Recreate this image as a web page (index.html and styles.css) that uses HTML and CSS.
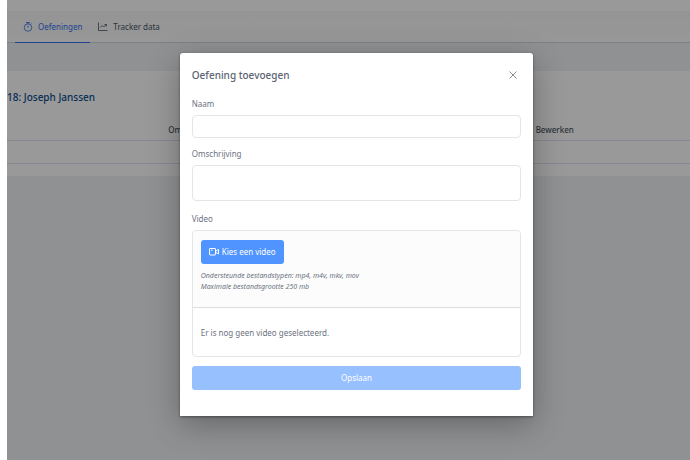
FILE: index.html
```html
<!DOCTYPE html>
<html lang="nl">

<head>
    <meta charset="UTF-8">
    <meta name="viewport" content="width=device-width, initial-scale=1.0">
    <title>Oefeningen</title>
    <link rel="stylesheet" href="styles.css">
</head>

<body>
    <div class="app">
        <div class="topbar"></div>
        <nav class="tabs">
            <a href="#oefeningen" class="tab active">
                <svg class="icon" viewBox="0 0 20 20" fill="none" stroke="currentColor" stroke-width="1.6">
                    <circle cx="10" cy="11" r="7.500" />
                    <path d="M6 1h8M10 1v3M10 7v4.500M15 5l2-2" />
                </svg>
                Oefeningen
            </a>
            <a href="#tracker" class="tab">
                <svg class="icon" viewBox="0 0 20 20" fill="none" stroke="currentColor" stroke-width="1.6">
                    <path d="M1 1v16h18" />
                    <path d="M4.500 11l4-4 3 3 5-5M13 5h4v4" />
                </svg>
                Tracker data
            </a>
        </nav>

        <main class="panel">
            <h2 class="client">18: Joseph Janssen</h2>
            <table class="exercises">
                <thead>
                    <tr>
                        <th class="col-name"></th>
                        <th class="col-desc">Omschrijving</th>
                        <th>Bewerken</th>
                    </tr>
                </thead>
                <tbody>
                    <tr>
                        <td></td>
                        <td></td>
                        <td></td>
                    </tr>
                </tbody>
            </table>
        </main>

        <div class="overlay">
            <form class="modal" role="dialog" aria-labelledby="modal-title" autocomplete="off">
                <div class="modal-header">
                    <h1 id="modal-title">Oefening toevoegen</h1>
                    <button type="button" class="close" aria-label="Sluiten">
                        <svg viewBox="0 0 8 8" fill="none" stroke="currentColor">
                            <path d="M0.500 0.500l7 7M7.500 0.500l-7 7" />
                        </svg>
                    </button>
                </div>

                <label for="naam">Naam</label>
                <input type="text" id="naam" name="naam">

                <label for="omschrijving">Omschrijving</label>
                <textarea id="omschrijving" name="omschrijving"></textarea>

                <label for="kies-video">Video</label>
                <div class="upload">
                    <div class="upload-top">
                        <button type="button" id="kies-video" class="choose">
                            <svg class="icon" viewBox="0 0 20 20" fill="none" stroke="currentColor" stroke-width="2">
                                <rect x="1" y="3" width="12" height="13" rx="1" />
                                <path d="M14 8l5-3v9l-5-3M4 6.500h3" />
                            </svg>
                            Kies een video
                        </button>
                        <p class="hint">Ondersteunde bestandstypen: mp4, m4v, mkv, mov<br>Maximale bestandsgrootte 250 mb</p>
                    </div>
                    <div class="upload-list">Er is nog geen video geselecteerd.</div>
                </div>

                <button type="submit" class="save" disabled>Opslaan</button>
            </form>
        </div>
    </div>
</body>

</html>
```
FILE: styles.css
```css
* {
    box-sizing: border-box;
}

body {
    margin: 0;
    background-color: #fff;
    color: #6b7280;
    font-family: "Noto Sans", "Open Sans", sans-serif;
    font-size: 8px;
    line-height: 12px;
}

button,
input,
textarea {
    font: inherit;
}

.app {
    position: relative;
    min-height: 100vh;
    margin-left: 7px;
    overflow: hidden;
    background-color: #f0f2f5;
}

.topbar {
    height: 11px;
    background-color: #fff;
}

.tabs {
    display: flex;
    height: 32px;
    padding-left: 8px;
    background: linear-gradient(#f8f8f8, #fdfdfd);
    border-bottom: 1px solid #d4d6d9;
}

.tab {
    display: flex;
    align-items: center;
    gap: 5px;
    height: 32px;
    padding: 0 8px;
    color: #4b5563;
    text-decoration: none;
}

.tab.active {
    color: #2f6fed;
    border-bottom: 1px solid #2f6fed;
}

.icon {
    width: 10px;
    height: 10px;
    flex: none;
}

/* patient panel */
.panel {
    margin-top: 28px;
    padding: 20px 0 12px;
    background-color: #fff;
}

.client {
    margin: 0 0 17px;
    color: #0b4f8f;
    font-size: 10px;
    font-weight: 500;
    line-height: 12px;
}

.exercises {
    width: 100%;
    table-layout: fixed;
    border-collapse: collapse;
}

.exercises th,
.exercises td {
    height: 23px;
    padding: 0;
    text-align: left;
    border-bottom: 1px solid #dde3f0;
}

.exercises th {
    height: 20px;
    color: #4b5563;
    font-weight: 500;
}

.col-name {
    width: 23.6%;
}

.col-desc {
    width: 53.8%;
}

/* modal */
.overlay {
    position: absolute;
    inset: 0;
    display: flex;
    align-items: flex-start;
    justify-content: center;
    padding: 53px 0 0 16px;
    background-color: rgba(0, 0, 0, 0.4);
}

.modal {
    display: flex;
    flex-direction: column;
    width: 53%;
    padding: 12px 12px 26px;
    background-color: #fff;
    border-radius: 3px 3px 0 0;
    box-shadow: 0 8px 32px rgba(0, 0, 0, 0.3), 0 1px 3px rgba(0, 0, 0, 0.4);
}

.modal-header {
    display: flex;
    align-items: center;
    justify-content: space-between;
    height: 20px;
    margin-bottom: 13px;
}

.modal-header h1 {
    margin: 0;
    color: #5b6472;
    font-size: 10px;
    font-weight: 500;
}

.close {
    display: flex;
    padding: 4px;
    background: none;
    border: 0;
    color: #858b95;
}

.close svg {
    width: 8px;
    height: 8px;
}

.modal label {
    margin-bottom: 5px;
}

.modal input,
.modal textarea {
    width: 100%;
    margin: 0 0 10px;
    padding: 4px 8px;
    color: #4b5563;
    border: 1px solid #e3e5e8;
    border-radius: 4px;
    outline: none;
    resize: none;
}

.modal input {
    height: 23px;
}

.modal textarea {
    height: 36px;
    margin-bottom: 12px;
}

.upload {
    margin-bottom: 9px;
    border: 1px solid #e3e5e8;
    border-radius: 4px;
}

.upload-top {
    padding: 9px 8px 15px;
    background-color: #fcfcfc;
    border-bottom: 1px solid #dcdee1;
    border-radius: 4px 4px 0 0;
}

.choose {
    display: flex;
    align-items: center;
    gap: 3px;
    height: 24px;
    padding: 0 8px;
    background-color: #5094ff;
    border: 0;
    border-radius: 3px;
    color: #fff;
}

.hint {
    margin: 6px 0 0;
    font-size: 7px;
    font-style: italic;
    line-height: 11px;
}

.upload-list {
    padding: 19px 8px 17px;
}

.save {
    height: 24px;
    background-color: #97c0ff;
    border: 0;
    border-radius: 3px;
    color: #fff;
}
```
